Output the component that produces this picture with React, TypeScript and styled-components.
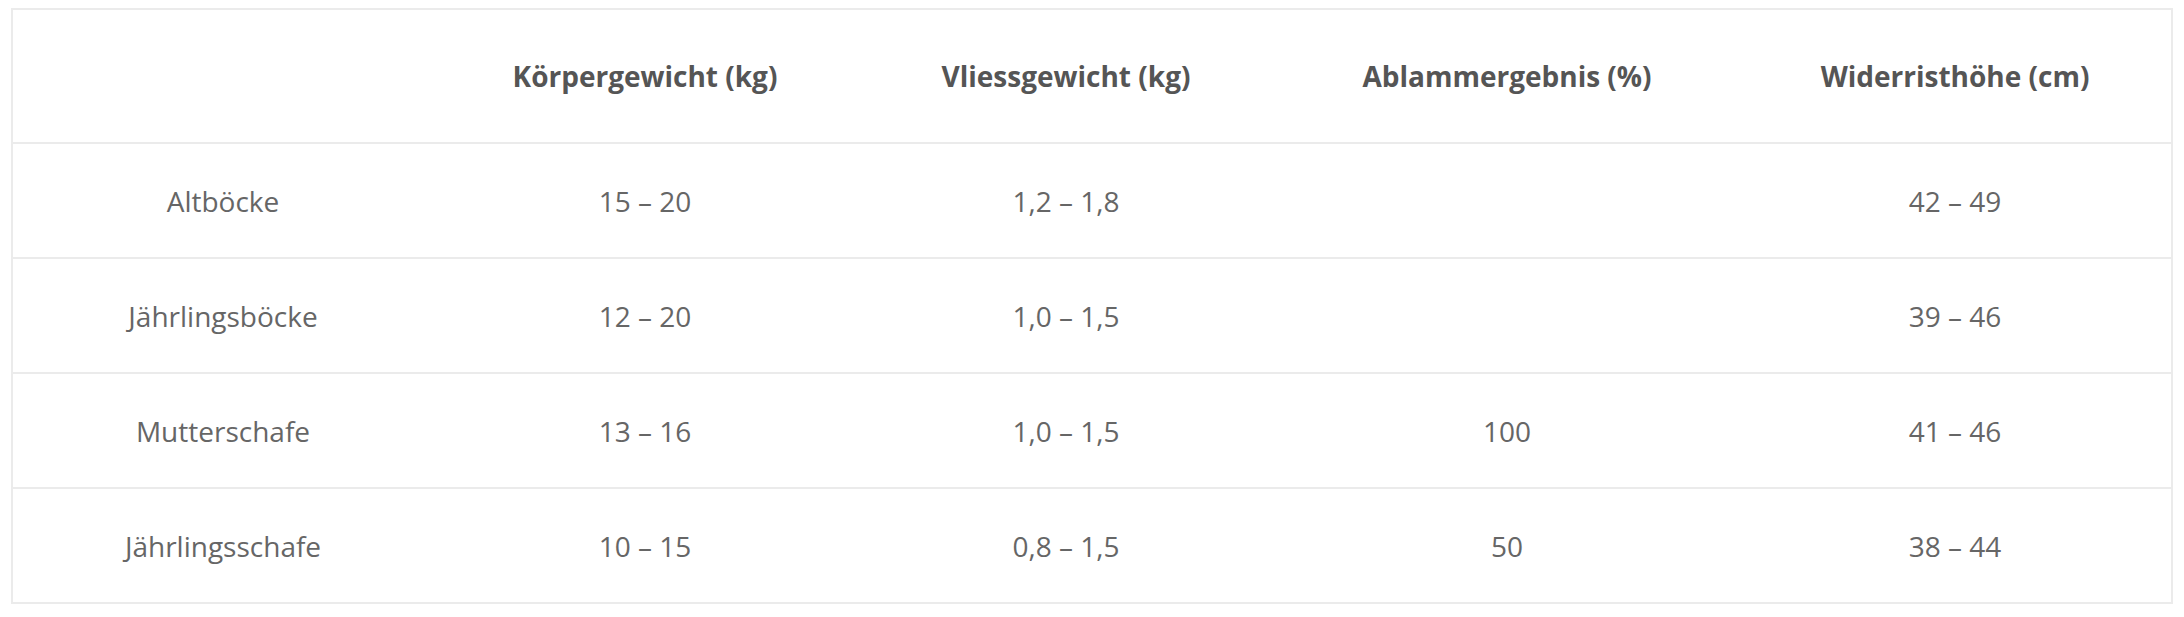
import styled, { createGlobalStyle } from "styled-components";

interface Row {
  id: string;
  label: string;
  weight: string;
  fleece: string;
  lambing: string;
  height: string;
}

const columns = [
  { key: "label", header: "", width: "420px" },
  { key: "weight", header: "Körpergewicht (kg)", width: "424px" },
  { key: "fleece", header: "Vliessgewicht (kg)", width: "418px" },
  { key: "lambing", header: "Ablammergebnis (%)", width: "464px" },
  { key: "height", header: "Widerristhöhe (cm)", width: "432px" },
] as const;

const rows: Row[] = [
  { id: "1", label: "Altböcke", weight: "15 – 20", fleece: "1,2 – 1,8", lambing: "", height: "42 – 49" },
  { id: "2", label: "Jährlingsböcke", weight: "12 – 20", fleece: "1,0 – 1,5", lambing: "", height: "39 – 46" },
  { id: "3", label: "Mutterschafe", weight: "13 – 16", fleece: "1,0 – 1,5", lambing: "100", height: "41 – 46" },
  { id: "4", label: "Jährlingsschafe", weight: "10 – 15", fleece: "0,8 – 1,5", lambing: "50", height: "38 – 44" },
];

const GlobalStyle = createGlobalStyle`
  html, body {
    margin: 0;
    padding: 0;
    background: #ffffff;
    font-family: "Open Sans", "Noto Sans", Arial, sans-serif;
  }
`;

const Page = styled.div`
  padding: 8px 11px;
`;

const StyledTable = styled.table`
  width: 2162px;
  border-collapse: separate;
  border-spacing: 0;
  border: 2px solid #ebebeb;
  table-layout: fixed;
`;

const HeaderCell = styled.th<{ $width: string }>`
  box-sizing: border-box;
  width: ${({ $width }) => $width};
  height: 134px;
  padding: 0;
  text-align: center;
  vertical-align: middle;
  font-size: 28px;
  font-weight: 700;
  color: #555555;
  border-bottom: 2px solid #ebebeb;
  white-space: nowrap;
`;

const BodyRow = styled.tr`
  &:last-child td {
    border-bottom: none;
    height: 113px;
  }
`;

const Cell = styled.td`
  box-sizing: border-box;
  height: 115px;
  padding: 0;
  text-align: center;
  vertical-align: middle;
  font-size: 28px;
  font-weight: 400;
  color: #666666;
  border-bottom: 2px solid #ebebeb;
`;

export default function App() {
  return (
    <Page>
      <GlobalStyle />
      <StyledTable>
        <thead>
          <tr>
            {columns.map((col) => (
              <HeaderCell key={col.key} $width={col.width}>
                {col.header}
              </HeaderCell>
            ))}
          </tr>
        </thead>
        <tbody>
          {rows.map((row) => (
            <BodyRow key={row.id}>
              {columns.map((col) => (
                <Cell key={col.key}>{row[col.key]}</Cell>
              ))}
            </BodyRow>
          ))}
        </tbody>
      </StyledTable>
    </Page>
  );
}
